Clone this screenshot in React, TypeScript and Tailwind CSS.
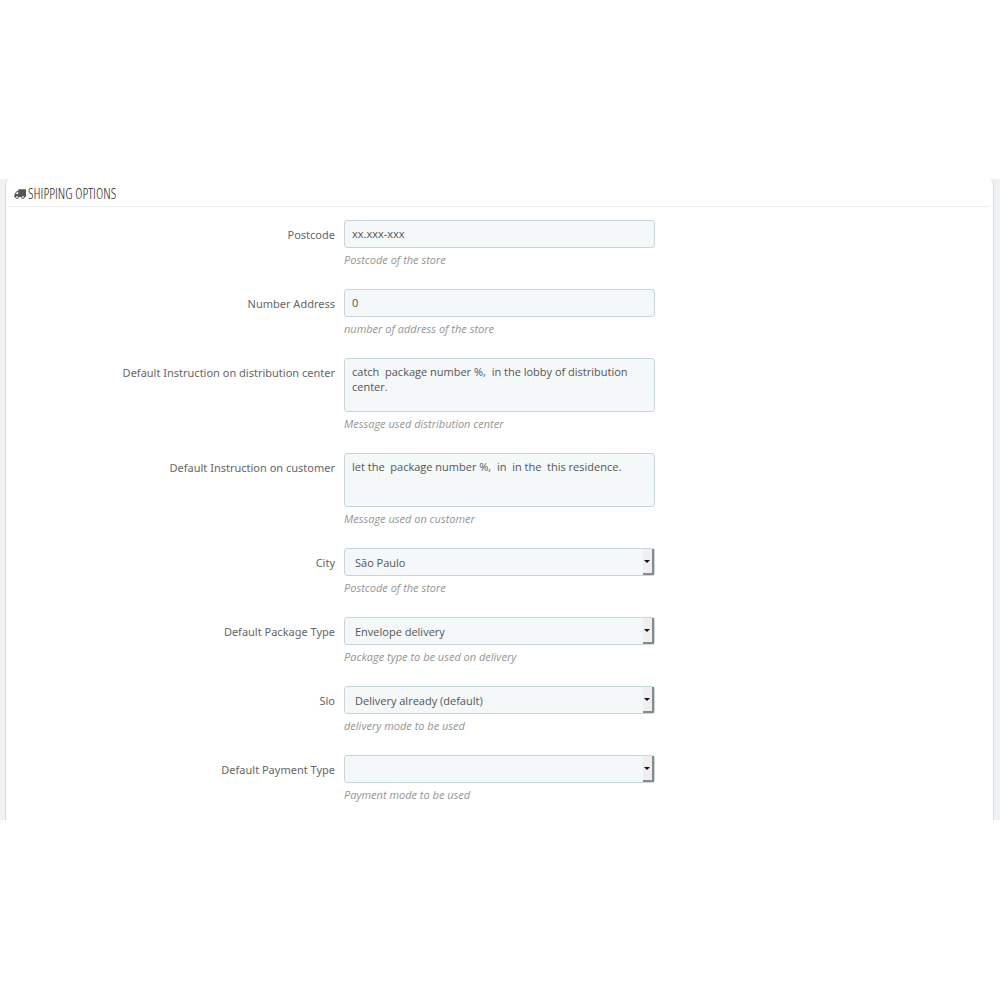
import { ReactNode } from 'react';
import { FaTruck } from 'react-icons/fa';

const inputStyle =
  'block w-full rounded-[3px] border border-[#c7d6db] bg-[#f4f8f9] text-[11px] text-[#555555] outline-none';

interface FieldRowProps {
  id: string;
  label: string;
  help: string;
  children: ReactNode;
}

function FieldRow({ id, label, help, children }: FieldRowProps) {
  return (
    <div className="flex gap-[9px]">
      <label htmlFor={id} className="w-1/3 shrink-0 pt-[5px] text-right font-['Noto_Sans',sans-serif] text-[11px] leading-5 text-[#666666]">
        {label}
      </label>
      <div className="w-[31.5%]">
        {children}
        <p id={`${id}-help`} className="mt-1 text-[11px] italic leading-4 text-[#959595]">
          {help}
        </p>
      </div>
    </div>
  );
}

interface TextFieldProps {
  id: string;
  label: string;
  help: string;
  value: string;
}

function TextField({ id, label, help, value }: TextFieldProps) {
  return (
    <FieldRow id={id} label={label} help={help}>
      <input id={id} type="text" defaultValue={value} aria-describedby={`${id}-help`} className={`${inputStyle} h-7 px-[7px] pb-0.5`} />
    </FieldRow>
  );
}

function TextAreaField({ id, label, help, value }: TextFieldProps) {
  return (
    <FieldRow id={id} label={label} help={help}>
      <textarea
        id={id}
        defaultValue={value}
        aria-describedby={`${id}-help`}
        className={`${inputStyle} h-[54px] resize-none px-[7px] py-[5px] leading-[15px]`}
      />
    </FieldRow>
  );
}

function SelectField({ id, label, help, value }: TextFieldProps) {
  return (
    <FieldRow id={id} label={label} help={help}>
      <div className="relative">
        <select id={id} defaultValue={value} aria-describedby={`${id}-help`} className={`${inputStyle} h-7 appearance-none pl-[10px] pr-4 pt-0.5`}>
          <option value={value}>{value}</option>
        </select>
        {/* Bevelled arrow button */}
        <span className="pointer-events-none absolute inset-y-px right-px flex w-[11px] items-center justify-center border-b-2 border-r-2 border-[#8a8a8a] bg-[#efefef]">
          <svg viewBox="0 0 6 3" className="h-[3px] w-[6px]" fill="#111111" aria-hidden="true">
            <path d="M0 0h6L3 3z" />
          </svg>
        </span>
      </div>
    </FieldRow>
  );
}

export default function App() {
  return (
    <div className="min-h-screen bg-white py-[179px] font-['Open_Sans',sans-serif]">
      <main className="bg-[#eff1f2] pl-[5px] pr-1.5">
        <section className="rounded-t-[5px] border-x border-[#d8dbde] bg-white pb-[17px]">
          <h3 className="mx-[3px] flex h-7 items-center gap-0.5 border-b border-[#eeeeee] pl-[5px] pt-0.5 font-['Open_Sans_Condensed_Light','Open_Sans_Light_Condensed','Liberation_Sans_Narrow',sans-serif] text-[14px] font-light text-[#222222]">
            <FaTruck className="h-3 w-3 -scale-x-100 text-[#555555]" aria-hidden="true" />
            SHIPPING OPTIONS
          </h3>

          <form className="mt-[13px] space-y-[21px]">
            <TextField id="postcode" label="Postcode" help="Postcode of the store" value="xx.xxx-xxx" />
            <TextField id="number" label="Number Address" help="number of address of the store" value="0" />
            <TextAreaField
              id="distribution"
              label="Default Instruction on distribution center"
              help="Message used distribution center"
              value="catch  package number %,  in the lobby of distribution center."
            />
            <TextAreaField
              id="customer"
              label="Default Instruction on customer"
              help="Message used on customer"
              value="let the  package number %,  in  in the  this residence."
            />
            <SelectField id="city" label="City" help="Postcode of the store" value="São Paulo" />
            <SelectField id="package" label="Default Package Type" help="Package type to be used on delivery" value="Envelope delivery" />
            <SelectField id="slo" label="Slo" help="delivery mode to be used" value="Delivery already (default)" />
            <SelectField id="payment" label="Default Payment Type" help="Payment mode to be used" value="" />
          </form>
        </section>
      </main>
    </div>
  );
}
